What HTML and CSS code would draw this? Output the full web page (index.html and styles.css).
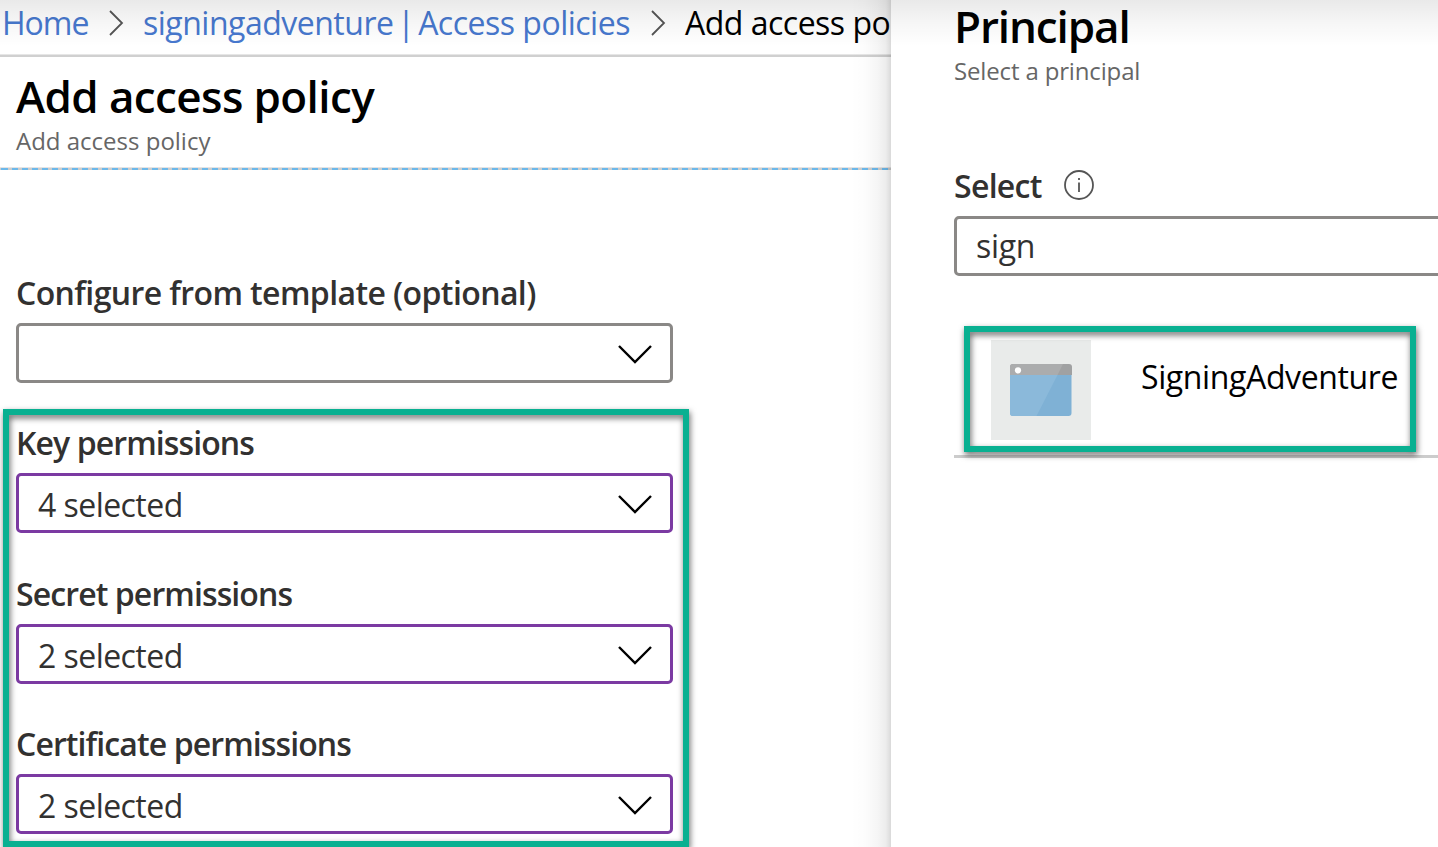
FILE: index.html
```html
<!DOCTYPE html>
<html lang="en">
<head>
<meta charset="utf-8">
<title>Add access policy</title>
<link rel="stylesheet" href="styles.css">
</head>
<body>
<div class="portal">
  <main class="policy">
    <nav class="crumbs">
      <a class="crumb crumb-home">Home</a>
      <svg class="crumb-sep" width="15" height="26" viewBox="0 0 15 26"><path d="M1 1 13 13 1 25"/></svg>
      <a class="crumb crumb-vault">signingadventure <span class="bar">|</span> Access policies</a>
      <svg class="crumb-sep" width="15" height="26" viewBox="0 0 15 26"><path d="M1 1 13 13 1 25"/></svg>
      <span class="crumb crumb-current">Add access policy</span>
    </nav>
    <header class="blade-head">
      <h1 class="title title-policy">Add access policy</h1>
      <p class="subtitle subtitle-policy">Add access policy</p>
    </header>
    <section class="template">
      <label class="label label-template">Configure from template (optional)</label>
      <div class="select"><span class="value"></span><svg class="chevron" width="36" height="20" viewBox="0 0 36 20"><path d="M2 2 18 18 34 2"/></svg></div>
    </section>
    <section class="permissions marked">
      <div class="field">
        <label class="label label-key">Key permissions</label>
        <div class="select edited"><span class="value">4 selected</span><svg class="chevron" width="36" height="20" viewBox="0 0 36 20"><path d="M2 2 18 18 34 2"/></svg></div>
      </div>
      <div class="field">
        <label class="label label-secret">Secret permissions</label>
        <div class="select edited"><span class="value">2 selected</span><svg class="chevron" width="36" height="20" viewBox="0 0 36 20"><path d="M2 2 18 18 34 2"/></svg></div>
      </div>
      <div class="field">
        <label class="label label-cert">Certificate permissions</label>
        <div class="select edited"><span class="value">2 selected</span><svg class="chevron" width="36" height="20" viewBox="0 0 36 20"><path d="M2 2 18 18 34 2"/></svg></div>
      </div>
    </section>
  </main>
  <aside class="principal">
    <h2 class="title title-principal">Principal</h2>
    <p class="subtitle subtitle-principal">Select a principal</p>
    <div class="search-label">
      <label class="label label-select">Select</label>
      <svg class="info" width="30" height="30" viewBox="0 0 30 30"><circle cx="15" cy="15" r="14"/><path d="M15 12.5V22M15 8V10"/></svg>
    </div>
    <div class="search">sign</div>
    <div class="results">
      <div class="result marked">
        <div class="tile">
          <svg width="62" height="52" viewBox="0 0 62 52">
            <path fill="#7fb1d5" d="M0 11H61.5V49a3 3 0 0 1-3 3H3a3 3 0 0 1-3-3Z"/>
            <path fill="#8bb9da" d="M0 11H47.5L26.5 52H3a3 3 0 0 1-3-3Z"/>
            <path fill="#a0a1a2" d="M3 0H59a3 3 0 0 1 3 3V11H0V3A3 3 0 0 1 3 0Z"/>
            <path fill="#abacad" d="M3 0H53L47.5 11H0V3A3 3 0 0 1 3 0Z"/>
            <circle cx="8" cy="6.3" r="3.1" fill="#fff"/>
          </svg>
        </div>
        <span class="result-name">SigningAdventure</span>
      </div>
    </div>
  </aside>
  <div class="top-shade"></div>
</div>
</body>
</html>
```
FILE: styles.css
```css
* { box-sizing: border-box; }
body { margin: 0; background: #fff; color: #323130; font-family: "Open Sans", "Noto Sans", sans-serif; }
h1, h2, p { margin: 0; }
.portal { position: relative; display: grid; grid-template-columns: 891px 547px; width: 1438px; height: 847px; overflow: hidden; }

.policy { position: relative; overflow: hidden; }
.policy::after { content: ""; position: absolute; top: 0; right: 0; width: 40px; height: 100%; background: linear-gradient(to left, rgba(0,0,0,.15), rgba(0,0,0,.075) 5px, rgba(0,0,0,.04) 13px, rgba(0,0,0,.012) 26px, rgba(0,0,0,0)); }

.crumbs { display: flex; align-items: flex-start; height: 57px; padding-left: 2px; border-bottom: 2px solid #d0d0d0; box-shadow: inset 0 -1px #e6e6e6; }
.crumb { flex: none; font-size: 32px; line-height: 45px; letter-spacing: -.5px; white-space: nowrap; color: #4778ce; }
.crumb-home { width: 107px; letter-spacing: -1px; }
.crumb-vault { width: 508px; }
.bar { margin: 0 -4px; }
.crumb-current { color: #000; }
.crumb-sep { flex: none; margin-top: 10px; width: 15px; }
.crumb-sep + .crumb { margin-left: 19px; }
.crumb-sep path { fill: none; stroke: #555; stroke-width: 1.8; }

.title { font-size: 44px; line-height: 60px; font-weight: 580; color: #000; letter-spacing: -.6px; white-space: nowrap; }
.subtitle { font-size: 24px; line-height: 30px; color: #666; white-space: nowrap; }
.blade-head { height: 111px; padding: 9px 16px 0; border-bottom: 1px solid #e4e4e4; }
.template::before { content: ""; display: block; height: 2px; background: repeating-linear-gradient(to right, #6cb8ea 0 6px, #ccc 6px 10px); background-position: 2px 0; }

.label { display: block; font-size: 32px; line-height: 40px; font-weight: 580; letter-spacing: -.9px; white-space: nowrap; }
.template { padding-bottom: 26px; }
.template .label { margin: 103px 0 10px 16px; letter-spacing: -.6px; }
.select { display: flex; align-items: center; justify-content: space-between; width: 657px; height: 60px; padding: 0 17px 0 19px; border: 3px solid #8a8886; border-radius: 5px; }
.template .select { margin-left: 16px; }
.edited { border-color: #7b3aa2; }
.value { font-size: 32px; line-height: 52px; padding-top: 4px; letter-spacing: -.55px; white-space: nowrap; }
.chevron { margin-top: 1px; }
.chevron path { fill: none; stroke: #000; stroke-width: 2.4; }

.marked { position: relative; }
.marked::before { content: ""; position: absolute; inset: 0; border: 6px solid #09b091; filter: drop-shadow(1px 3px 3px rgba(0,0,0,.6)); }
.permissions { display: grid; grid-template-rows: 151px 150px auto; width: 686px; height: 438px; margin-left: 3px; padding: 14px 13px 0; }
.permissions .label { margin-bottom: 10px; }

.principal { padding-left: 63px; overflow: hidden; }
.title-principal { height: 56px; line-height: 52px; letter-spacing: -1.1px; }
.subtitle-principal { letter-spacing: -.15px; }
.search-label { display: flex; align-items: flex-start; height: 130px; padding-top: 80px; }
.label-select { width: 110px; letter-spacing: -.7px; }
.info { margin-top: 4px; }
.info circle, .info path { fill: none; stroke: #555; stroke-width: 1.8; }
.search { height: 60px; width: 520px; padding-left: 19px; border: 3px solid #8a8886; border-radius: 5px; font-size: 32px; line-height: 54px; letter-spacing: -.3px; }
.results { height: 182px; padding: 50px 0 0 10px; border-bottom: 3px solid #ccc; }
.result { display: flex; width: 452px; height: 126px; padding: 14px 0 0 27px; }
.tile { display: grid; place-items: center; width: 100px; height: 100px; margin-right: 50px; background: #e9ebea; }
.result-name { font-size: 32px; line-height: 74px; letter-spacing: -.38px; color: #000; white-space: nowrap; }
.top-shade { position: absolute; inset: 0 0 auto; height: 46px; background: linear-gradient(rgba(0,0,0,.085), rgba(0,0,0,.035) 50%, rgba(0,0,0,0)); }
```
